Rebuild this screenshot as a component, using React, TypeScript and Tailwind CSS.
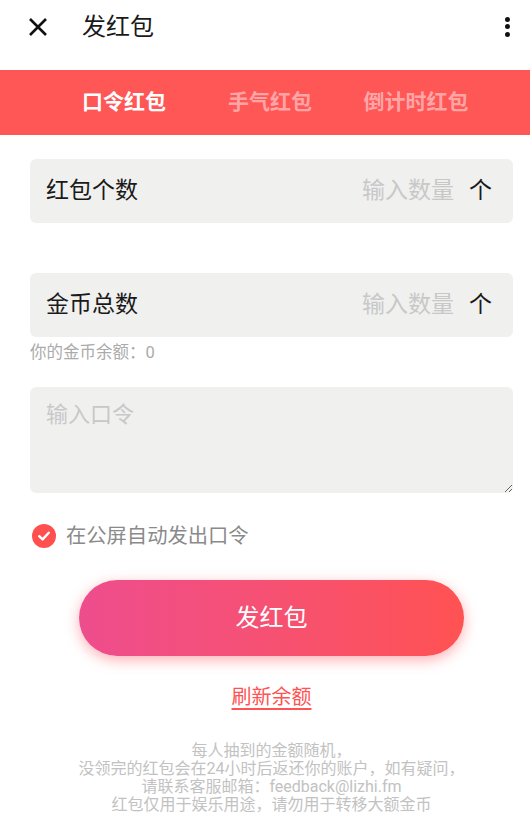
import React from "react";

export default function App() {
  const font = { fontFamily: "Roboto, 'Noto Sans CJK SC', sans-serif" };
  return (
    <div className="w-[530px] min-h-[839px] bg-white" style={font}>
      {/* Header */}
      <div className="h-[70px] pb-[16px] flex items-center">
        <div className="ml-[28px] w-[20px] h-[20px] flex items-center justify-center">
          <svg width="20" height="20" viewBox="0 0 20 20">
            <path d="M2 2 L18 18 M18 2 L2 18" stroke="#111" strokeWidth="2.6" strokeLinecap="butt" />
          </svg>
        </div>
        <div className="ml-[34px] text-[24px] leading-[30px] text-[#1a1a1a]">发红包</div>
        <div className="ml-auto mr-[20px] -mt-[1px] flex flex-col gap-[2.5px] items-center">
          <span className="w-[5px] h-[5px] rounded-full bg-[#111]" />
          <span className="w-[5px] h-[5px] rounded-full bg-[#111]" />
          <span className="w-[5px] h-[5px] rounded-full bg-[#111]" />
        </div>
      </div>

      {/* Tabs */}
      <div className="h-[65px] bg-[#ff5656] flex items-center pl-[51px]">
        <div className="w-[146px] text-center text-[21px] font-bold text-white">口令红包</div>
        <div className="w-[146px] text-center text-[21px] font-bold text-[#ffa5a5]">手气红包</div>
        <div className="w-[146px] text-center text-[21px] font-bold text-[#ffa5a5]">倒计时红包</div>
      </div>

      {/* Form */}
      <div className="ml-[30px] mr-[17px] pt-[24px]">
        <div className="h-[64px] rounded-[6px] bg-[#f0f0ef] flex items-center pl-[16px] pr-[21px]">
          <span className="text-[23px] text-[#1a1a1a]">红包个数</span>
          <span className="ml-auto text-[23px] text-[#c8c8c8]">输入数量</span>
          <span className="ml-[15px] text-[23px] text-[#1a1a1a]">个</span>
        </div>

        <div className="mt-[50px] h-[64px] rounded-[6px] bg-[#f0f0ef] flex items-center pl-[16px] pr-[21px]">
          <span className="text-[23px] text-[#1a1a1a]">金币总数</span>
          <span className="ml-auto text-[23px] text-[#c8c8c8]">输入数量</span>
          <span className="ml-[15px] text-[23px] text-[#1a1a1a]">个</span>
        </div>
        <div className="mt-[4px] text-[16.5px] leading-[24px] text-[#ababab]">你的金币余额：0</div>

        <textarea
          className="mt-[22px] block w-full h-[106px] rounded-[6px] bg-[#f0f0ef] px-[16px] py-[12px] text-[22px] leading-[32px] text-[#1a1a1a] placeholder:text-[#c8c8c8] outline-none"
          placeholder="输入口令"
        />

        <div className="mt-[28px] flex items-center">
          <div className="ml-[2px] w-[24px] h-[24px] rounded-full bg-[#ff5050] flex items-center justify-center">
            <svg width="14" height="14" viewBox="0 0 14 14">
              <path d="M2.2 7.2 L5.6 10.4 L11.8 3.8" stroke="#fff" strokeWidth="2.4" fill="none" strokeLinecap="round" strokeLinejoin="round" />
            </svg>
          </div>
          <span className="ml-[10px] text-[20.3px] text-[#8a8a8a]">在公屏自动发出口令</span>
        </div>

        <div className="mt-[29px] flex justify-center">
          <button className="w-[385px] h-[76px] rounded-full bg-gradient-to-r from-[#ee4d8d] to-[#ff5252] text-white text-[24px] shadow-[0_4px_14px_rgba(255,80,90,0.45)]">
            发红包
          </button>
        </div>

        <div className="mt-[26px] flex justify-center">
          <span className="text-[20px] leading-[30px] text-[#ff5252] underline underline-offset-[4px]">刷新余额</span>
        </div>

        <div className="mt-[30px] text-center text-[16px] leading-[17.7px] text-[#c2c2c2]">
          <div>每人抽到的金额随机，</div>
          <div>没领完的红包会在24小时后返还你的账户，如有疑问，</div>
          <div>请联系客服邮箱：feedback@lizhi.fm</div>
          <div>红包仅用于娱乐用途，请勿用于转移大额金币</div>
        </div>
      </div>
    </div>
  );
}
